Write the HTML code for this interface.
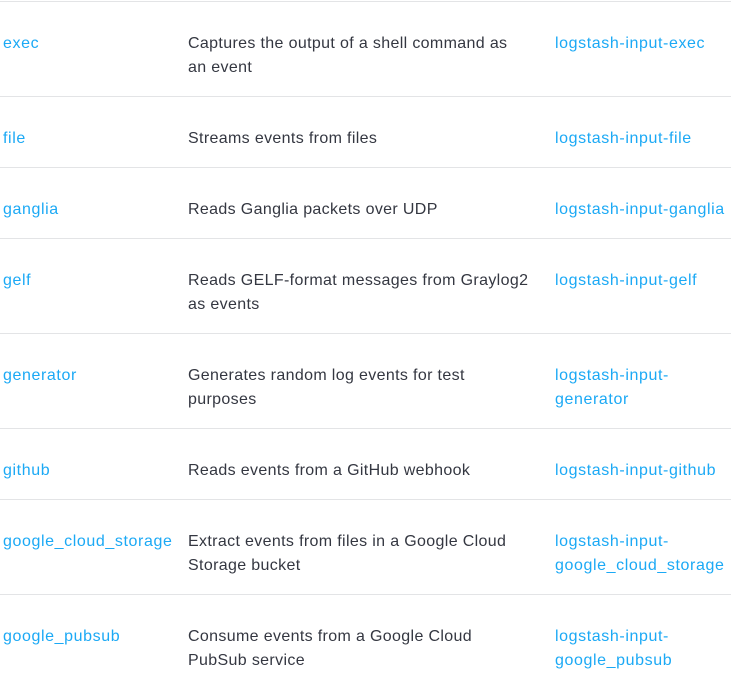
<!DOCTYPE html>
<html><head><style>
body{margin:0;background:#fff;font-family:"Liberation Sans",Arial,sans-serif;font-size:16px;line-height:24px;color:#343741;}
.l{position:absolute;left:0;width:731px;height:1px;background:#e3e4e6;}
.t{position:absolute;white-space:nowrap;letter-spacing:0.35px;margin-top:2px}
.a{color:#1ba9f5;letter-spacing:0.6px}
</style></head><body>
<div class="l" style="top:1px"></div>
<div class="l" style="top:96px"></div>
<div class="l" style="top:167px"></div>
<div class="l" style="top:238px"></div>
<div class="l" style="top:333px"></div>
<div class="l" style="top:428px"></div>
<div class="l" style="top:499px"></div>
<div class="l" style="top:594px"></div>

<div class="t a" style="left:3px;top:30px">exec</div>
<div class="t" style="left:188px;top:30px">Captures the output of a shell command as<br>an event</div>
<div class="t a" style="left:555px;top:30px">logstash-input-exec</div>

<div class="t a" style="left:3px;top:125px">file</div>
<div class="t" style="left:188px;top:125px">Streams events from files</div>
<div class="t a" style="left:555px;top:125px">logstash-input-file</div>

<div class="t a" style="left:3px;top:196px">ganglia</div>
<div class="t" style="left:188px;top:196px">Reads Ganglia packets over UDP</div>
<div class="t a" style="left:555px;top:196px">logstash-input-ganglia</div>

<div class="t a" style="left:3px;top:267px">gelf</div>
<div class="t" style="left:188px;top:267px">Reads GELF-format messages from Graylog2<br>as events</div>
<div class="t a" style="left:555px;top:267px">logstash-input-gelf</div>

<div class="t a" style="left:3px;top:362px">generator</div>
<div class="t" style="left:188px;top:362px">Generates random log events for test<br>purposes</div>
<div class="t a" style="left:555px;top:362px">logstash-input-<br>generator</div>

<div class="t a" style="left:3px;top:457px">github</div>
<div class="t" style="left:188px;top:457px">Reads events from a GitHub webhook</div>
<div class="t a" style="left:555px;top:457px">logstash-input-github</div>

<div class="t a" style="left:3px;top:528px">google_cloud_storage</div>
<div class="t" style="left:188px;top:528px">Extract events from files in a Google Cloud<br>Storage bucket</div>
<div class="t a" style="left:555px;top:528px">logstash-input-<br>google_cloud_storage</div>

<div class="t a" style="left:3px;top:623px">google_pubsub</div>
<div class="t" style="left:188px;top:623px">Consume events from a Google Cloud<br>PubSub service</div>
<div class="t a" style="left:555px;top:623px">logstash-input-<br>google_pubsub</div>
</body></html>
